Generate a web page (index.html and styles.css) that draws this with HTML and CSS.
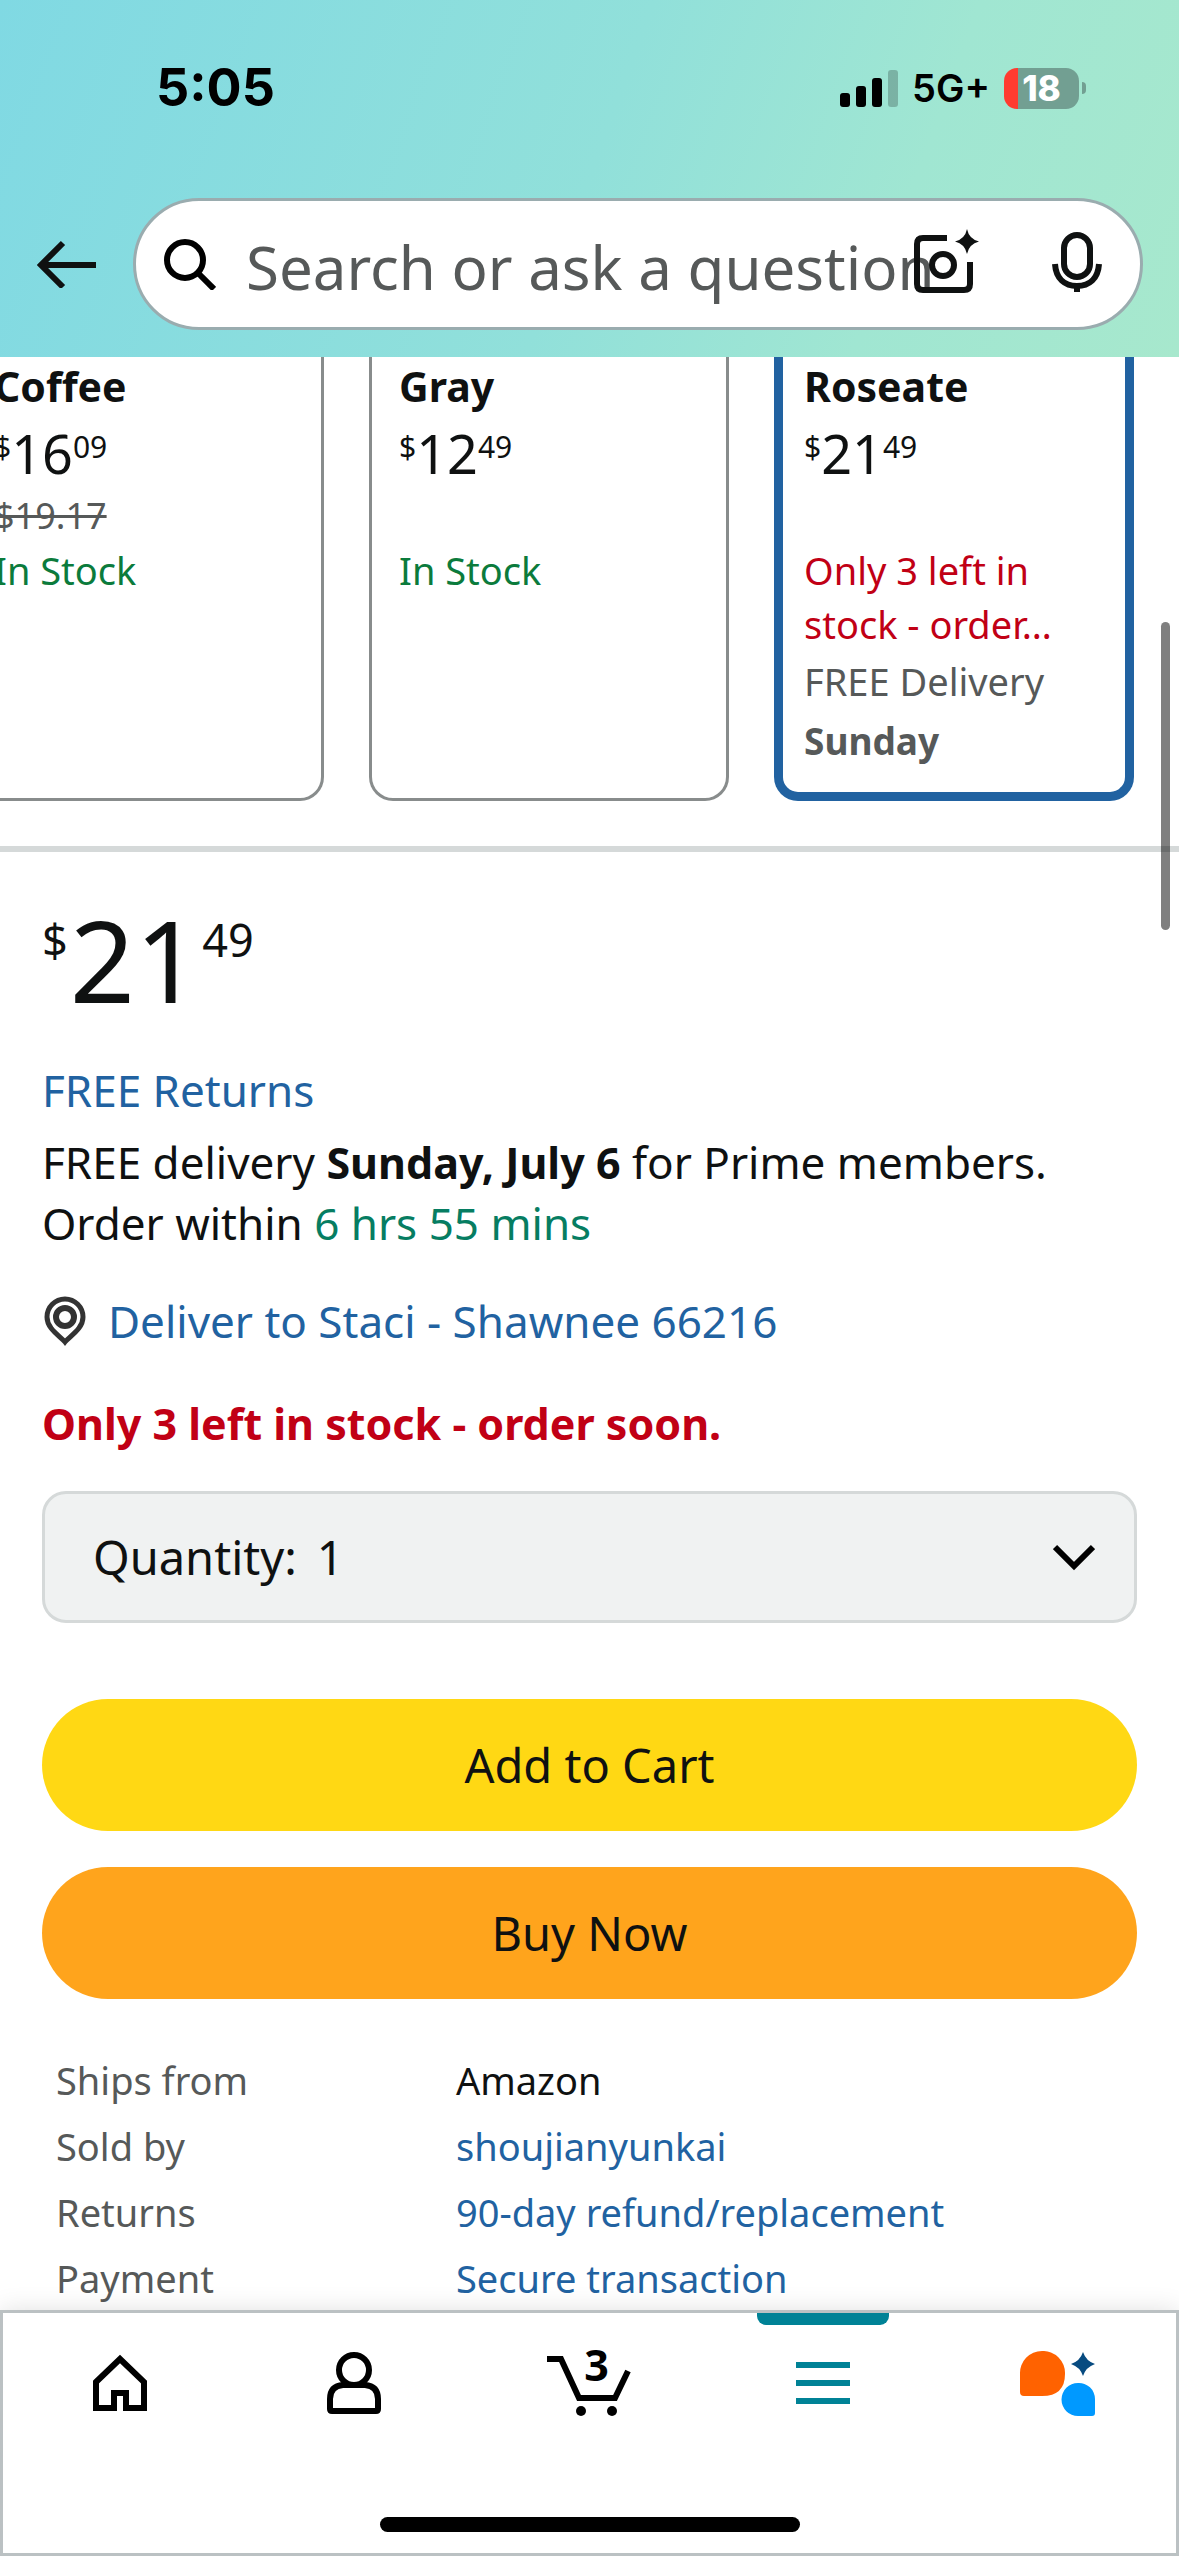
FILE: index.html
```html
<!DOCTYPE html>
<html lang="en">

<head>
    <meta charset="UTF-8">
    <meta name="viewport" content="width=device-width, initial-scale=1.0">
    <title>Product Details</title>
    <link rel="stylesheet" href="styles.css">
</head>

<body>
    <header class="top-bar">
        <!-- Status bar -->
        <div class="status-bar">
            <span class="clock">5:05</span>
            <div class="status-icons">
                <svg class="signal" viewBox="0 0 58 37" aria-hidden="true">
                    <rect x="0" y="23" width="10" height="14" rx="3" />
                    <rect x="16" y="16" width="10" height="21" rx="3" />
                    <rect x="32" y="8" width="10" height="29" rx="3" />
                    <rect x="48" y="0" width="10" height="37" rx="3" opacity="0.22" />
                </svg>
                <span class="network">5G+</span>
                <div class="battery"><span class="battery-level">18</span></div>
            </div>
        </div>

        <!-- Search -->
        <div class="search-row">
            <button class="icon-button back" aria-label="Back">
                <svg width="60" height="48" viewBox="0 0 60 48" fill="none" stroke="#0f1111" stroke-width="6">
                    <path d="M60 25H5M27 3L5 25l22 22" />
                </svg>
            </button>
            <form class="search-box">
                <svg width="52" height="52" viewBox="0 0 52 52" fill="none" stroke="#000" stroke-width="6" aria-hidden="true">
                    <circle cx="21" cy="22" r="18" />
                    <path d="M33 34l17 17" />
                </svg>
                <input class="search-input" type="text" aria-label="Search" placeholder="Search or ask a question">
                <div class="search-tools">
                    <button type="button" class="icon-button" aria-label="Search by photo">
                        <svg width="66" height="66" viewBox="0 0 66 66" fill="none" stroke="#0f1111" stroke-width="6">
                            <path d="M33 9H9q-6 0-6 6v40q0 6 6 6h41q6 0 6-6V33" />
                            <circle cx="29" cy="36" r="11" />
                            <path d="M53 0Q55 10 65 12.500Q55 15 53 25Q51 15 41 12.500Q51 10 53 0Z" fill="#0f1111" stroke="none" />
                        </svg>
                    </button>
                    <button type="button" class="icon-button" aria-label="Search by voice">
                        <svg width="50" height="62" viewBox="0 0 50 62" fill="none" stroke="#0f1111" stroke-width="6">
                            <rect x="12" y="4" width="26" height="42" rx="13" />
                            <path d="M3 33C4 48 13 55 25 55S46 48 47 33M25 55v6" />
                        </svg>
                    </button>
                </div>
            </form>
        </div>
    </header>

    <main class="content">
        <!-- Colour options -->
        <div class="options">
            <button class="option">
                <span class="option-name">Coffee</span>
                <span class="price"><span class="price-part">$</span>16<span class="price-part">09</span></span>
                <span class="list-price"><s>$19.17</s></span>
                <span class="in-stock">In Stock</span>
            </button>
            <button class="option">
                <span class="option-name">Gray</span>
                <span class="price"><span class="price-part">$</span>12<span class="price-part">49</span></span>
                <span class="list-price"></span>
                <span class="in-stock">In Stock</span>
            </button>
            <button class="option selected">
                <span class="option-name">Roseate</span>
                <span class="price"><span class="price-part">$</span>21<span class="price-part">49</span></span>
                <span class="list-price"></span>
                <span class="low-stock">Only 3 left in stock - order…</span>
                <span class="shipping">FREE Delivery <b>Sunday</b></span>
            </button>
        </div>

        <!-- Buy box -->
        <section class="buy-box">
            <div class="price price-large"><span class="price-part">$</span>21<span class="price-part">49</span></div>
            <a class="returns" href="#">FREE Returns</a>
            <p class="delivery">FREE delivery <b>Sunday, July 6</b> for Prime members. Order within <span class="countdown">6 hrs 55 mins</span></p>
            <a class="deliver-to" href="#">
                <svg width="44" height="50" viewBox="0 0 44 50" fill="none" stroke="#333" stroke-width="5" aria-hidden="true">
                    <path d="M23 46C18 40 5 33 5 21a18 18 0 0 1 36 0c0 12-13 19-18 25z" />
                    <circle cx="23" cy="21" r="9" stroke-width="6" />
                </svg>
                Deliver to Staci - Shawnee 66216
            </a>
            <p class="stock-warning">Only 3 left in stock - order soon.</p>

            <div class="quantity">
                <label for="quantity">Quantity:</label>
                <select id="quantity">
                    <option>1</option>
                    <option>2</option>
                    <option>3</option>
                </select>
                <svg class="chevron" width="42" height="28" viewBox="0 0 42 28" fill="none" stroke="#000" stroke-width="6" aria-hidden="true">
                    <path d="M2 4l19 19L40 4" />
                </svg>
            </div>

            <button class="buy-button add-to-cart">Add to Cart</button>
            <button class="buy-button buy-now">Buy Now</button>

            <table class="details">
                <tr>
                    <th scope="row">Ships from</th>
                    <td>Amazon</td>
                </tr>
                <tr>
                    <th scope="row">Sold by</th>
                    <td><a href="#">shoujianyunkai</a></td>
                </tr>
                <tr>
                    <th scope="row">Returns</th>
                    <td><a href="#">90-day refund/replacement</a></td>
                </tr>
                <tr>
                    <th scope="row">Payment</th>
                    <td><a href="#">Secure transaction</a></td>
                </tr>
            </table>
        </section>
        <div class="scroll-thumb"></div>
    </main>

    <!-- Bottom tabs -->
    <nav class="tabs">
        <div class="tab-list">
            <a class="tab" href="#" aria-label="Home">
                <svg width="54" height="66" viewBox="0 0 54 66" fill="none" stroke="#000" stroke-width="6">
                    <path d="M3 31L27 8l24 23v26H33V42H21v15H3z" />
                </svg>
            </a>
            <a class="tab" href="#" aria-label="Account">
                <svg width="54" height="66" viewBox="0 0 54 66" fill="none" stroke="#000" stroke-width="6">
                    <ellipse cx="27" cy="19" rx="15" ry="15" />
                    <path d="M16 34h22q13 1 13 14v10q0 2-2 2H5q-2 0-2-2V48q0-13 13-14z" />
                </svg>
            </a>
            <a class="tab cart" href="#" aria-label="Cart">
                <svg width="84" height="66" viewBox="0 0 84 66" fill="none" stroke="#000" stroke-width="6">
                    <path d="M0 8h14l18 39h36l13-27" />
                    <circle cx="34" cy="60" r="5" fill="#000" stroke="none" />
                    <circle cx="65" cy="60" r="5" fill="#000" stroke="none" />
                </svg>
                <span class="cart-count">3</span>
            </a>
            <a class="tab active" href="#" aria-label="Menu">
                <svg width="54" height="66" viewBox="0 0 54 66" fill="none" stroke="#008296" stroke-width="6">
                    <path d="M0 14h54M0 32h54M0 50h54" />
                </svg>
            </a>
            <a class="tab" href="#" aria-label="Assistant">
                <svg width="76" height="66" viewBox="0 0 76 66">
                    <path d="M23 0a22 22 0 0 1 23 23q0 22-23 22H5q-4 0-4-4V23A22 22 0 0 1 23 0z" fill="#ff6200" />
                    <path d="M59 32a16 16 0 0 1 17 16v14q0 3-3 3H59a16.500 16.500 0 0 1 0-33z" fill="#0099ff" />
                    <path d="M64 1q3 9 12 12-9 3-12 12-3-9-12-12 9-3 12-12z" fill="#084b80" />
                </svg>
            </a>
        </div>
        <div class="home-indicator"></div>
    </nav>
</body>

</html>
```
FILE: styles.css
```css
* {
    box-sizing: border-box;
}

body {
    font-family: "Noto Sans", sans-serif;
    font-size: 44px;
    line-height: 60px;
    color: #0f1111;
    background: #ffffff;
    margin: 0;
    height: 100vh;
    display: flex;
    flex-direction: column;
}

button,
input,
select {
    font: inherit;
    color: inherit;
    margin: 0;
    padding: 0;
    border: none;
    background: none;
}

svg {
    display: block;
    flex: none;
}

a {
    color: #2162a1;
    text-decoration: none;
}

p {
    margin: 0;
}

/* Header */
.top-bar {
    background: linear-gradient(110deg, #80d9e3 0%, #91e0da 50%, #a0e6d2 75%, #a7e8cd 100%);
    padding: 58px 36px 27px;
}

.status-bar {
    display: flex;
    justify-content: space-between;
    align-items: center;
    padding: 0 57px 0 120px;
    margin-bottom: 80px;
    font-family: Inter, sans-serif;
    color: #000000;
}

.clock {
    font-size: 52px;
    font-weight: 700;
}

.status-icons {
    display: flex;
    align-items: center;
    gap: 14px;
}

.signal {
    width: 58px;
    height: 37px;
}

.network {
    font-size: 38px;
    font-weight: 600;
}

.battery {
    position: relative;
    width: 75px;
    height: 41px;
    border-radius: 13px;
    background: linear-gradient(to right, #ff3b30 14px, #729f92 14px);
    margin-right: 7px;
}

.battery::after {
    content: "";
    position: absolute;
    right: -7px;
    top: 14px;
    width: 4px;
    height: 12px;
    border-radius: 0 4px 4px 0;
    background: #729f92;
}

.battery-level {
    display: block;
    text-align: center;
    font-size: 35px;
    line-height: 41px;
    font-weight: 800;
    color: #ffffff;
}

.search-row {
    display: flex;
    align-items: center;
    gap: 37px;
}

.icon-button {
    cursor: pointer;
}

.search-box {
    position: relative;
    flex: 1;
    display: flex;
    align-items: center;
    gap: 30px;
    height: 132px;
    padding: 0 0 0 28px;
    background: #ffffff;
    border: 3px solid #9aacaf;
    border-radius: 66px;
}

.search-input {
    flex: 1;
    min-width: 0;
    height: 100%;
    padding-top: 5px;
    outline: none;
    font-size: 60px;
}

.search-input::placeholder {
    color: #565959;
    opacity: 1;
}

.search-tools {
    position: absolute;
    right: 38px;
    top: 28px;
    display: flex;
    align-items: center;
    gap: 72px;
}

/* Colour options */
.content {
    position: relative;
    flex: 1;
    min-height: 0;
    overflow: hidden;
}

.options {
    display: flex;
    gap: 45px;
    padding-bottom: 45px;
    border-bottom: 6px solid #d5d9d9;
    margin-left: -36px;
}

.option {
    flex: none;
    width: 360px;
    display: flex;
    flex-direction: column;
    justify-content: flex-start;
    padding: 2px 27px 27px;
    border: 3px solid #888c8c;
    border-top: none;
    border-radius: 0 0 24px 24px;
    font-size: 38px;
    text-align: left;
    cursor: pointer;
}

.option.selected {
    border: 9px solid #2162a1;
    border-top: none;
    padding: 2px 21px 21px;
}

.option-name {
    font-size: 41px;
    line-height: 54px;
    font-weight: 700;
    margin-bottom: 10px;
}

.price {
    display: flex;
    align-items: flex-start;
    font-size: 54px;
}

.price-part {
    font-size: 30px;
    line-height: 48px;
}

.list-price {
    height: 54px;
    margin-top: 6px;
    font-size: 36px;
    line-height: 54px;
    color: #565959;
}

.in-stock,
.low-stock {
    line-height: 54px;
}

.in-stock {
    color: #0b7b3c;
}

.low-stock {
    color: #c10015;
}

.shipping {
    color: #565959;
}

.shipping b {
    display: block;
    font-size: 37px;
}

/* Buy box */
.buy-box {
    display: flex;
    flex-direction: column;
    padding: 51px 42px 0;
}

.price-large {
    gap: 2px;
    font-size: 114px;
    line-height: 112px;
    margin-bottom: 45px;
}

.price-large .price-part {
    font-size: 45px;
    line-height: 74px;
}

.returns {
    margin-bottom: 12px;
}

.delivery {
    margin-bottom: 38px;
}

.delivery b {
    font-size: 43px;
}

.countdown {
    color: #067d62;
}

.deliver-to {
    display: flex;
    align-items: center;
    gap: 22px;
    margin-bottom: 43px;
}

.stock-warning {
    color: #c10015;
    font-size: 43px;
    font-weight: 700;
    margin-bottom: 37px;
}

.quantity {
    position: relative;
    display: flex;
    align-items: center;
    gap: 20px;
    height: 132px;
    padding-left: 48px;
    margin-bottom: 76px;
    background: #f0f2f2;
    border: 3px solid #d5d9d9;
    border-radius: 24px;
    font-size: 47px;
}

.quantity select {
    flex: 1;
    height: 100%;
    appearance: none;
    outline: none;
}

.chevron {
    position: absolute;
    right: 39px;
    pointer-events: none;
}

.buy-button {
    height: 132px;
    border-radius: 66px;
    font-size: 47px;
    cursor: pointer;
}

.add-to-cart {
    background: #ffd814;
    margin-bottom: 36px;
}

.buy-now {
    background: #ffa41c;
    margin-bottom: 48px;
}

.details {
    border-collapse: collapse;
    margin-left: 14px;
    font-size: 38px;
}

.details th,
.details td {
    height: 66px;
    padding: 0;
    text-align: left;
    font-weight: 400;
}

.details th {
    width: 37%;
    color: #565959;
}

.scroll-thumb {
    position: absolute;
    right: 9px;
    top: 265px;
    width: 9px;
    height: 308px;
    border-radius: 5px;
    background: rgba(0, 0, 0, 0.5);
}

/* Bottom tabs */
.tabs {
    position: relative;
    background: #ffffff;
    border: 3px solid #bbc1c3;
    box-shadow: 0 0 24px rgba(15, 17, 17, 0.12);
    padding-bottom: 21px;
}

.tab-list {
    display: flex;
    padding-right: 2px;
    margin-bottom: 62px;
}

.tab {
    position: relative;
    flex: 1;
    display: flex;
    justify-content: center;
    align-items: center;
    height: 142px;
}

.tab.active::before {
    content: "";
    position: absolute;
    top: 0;
    width: 132px;
    height: 12px;
    border-radius: 0 0 9px 9px;
    background: #008296;
}

.cart-count {
    position: absolute;
    top: 22px;
    left: 0;
    right: 0;
    padding-left: 16px;
    text-align: center;
    font-size: 43px;
    font-weight: 700;
    color: #000000;
}

.home-indicator {
    width: 420px;
    height: 15px;
    margin: 0 auto;
    border-radius: 8px;
    background: #000000;
}
```
